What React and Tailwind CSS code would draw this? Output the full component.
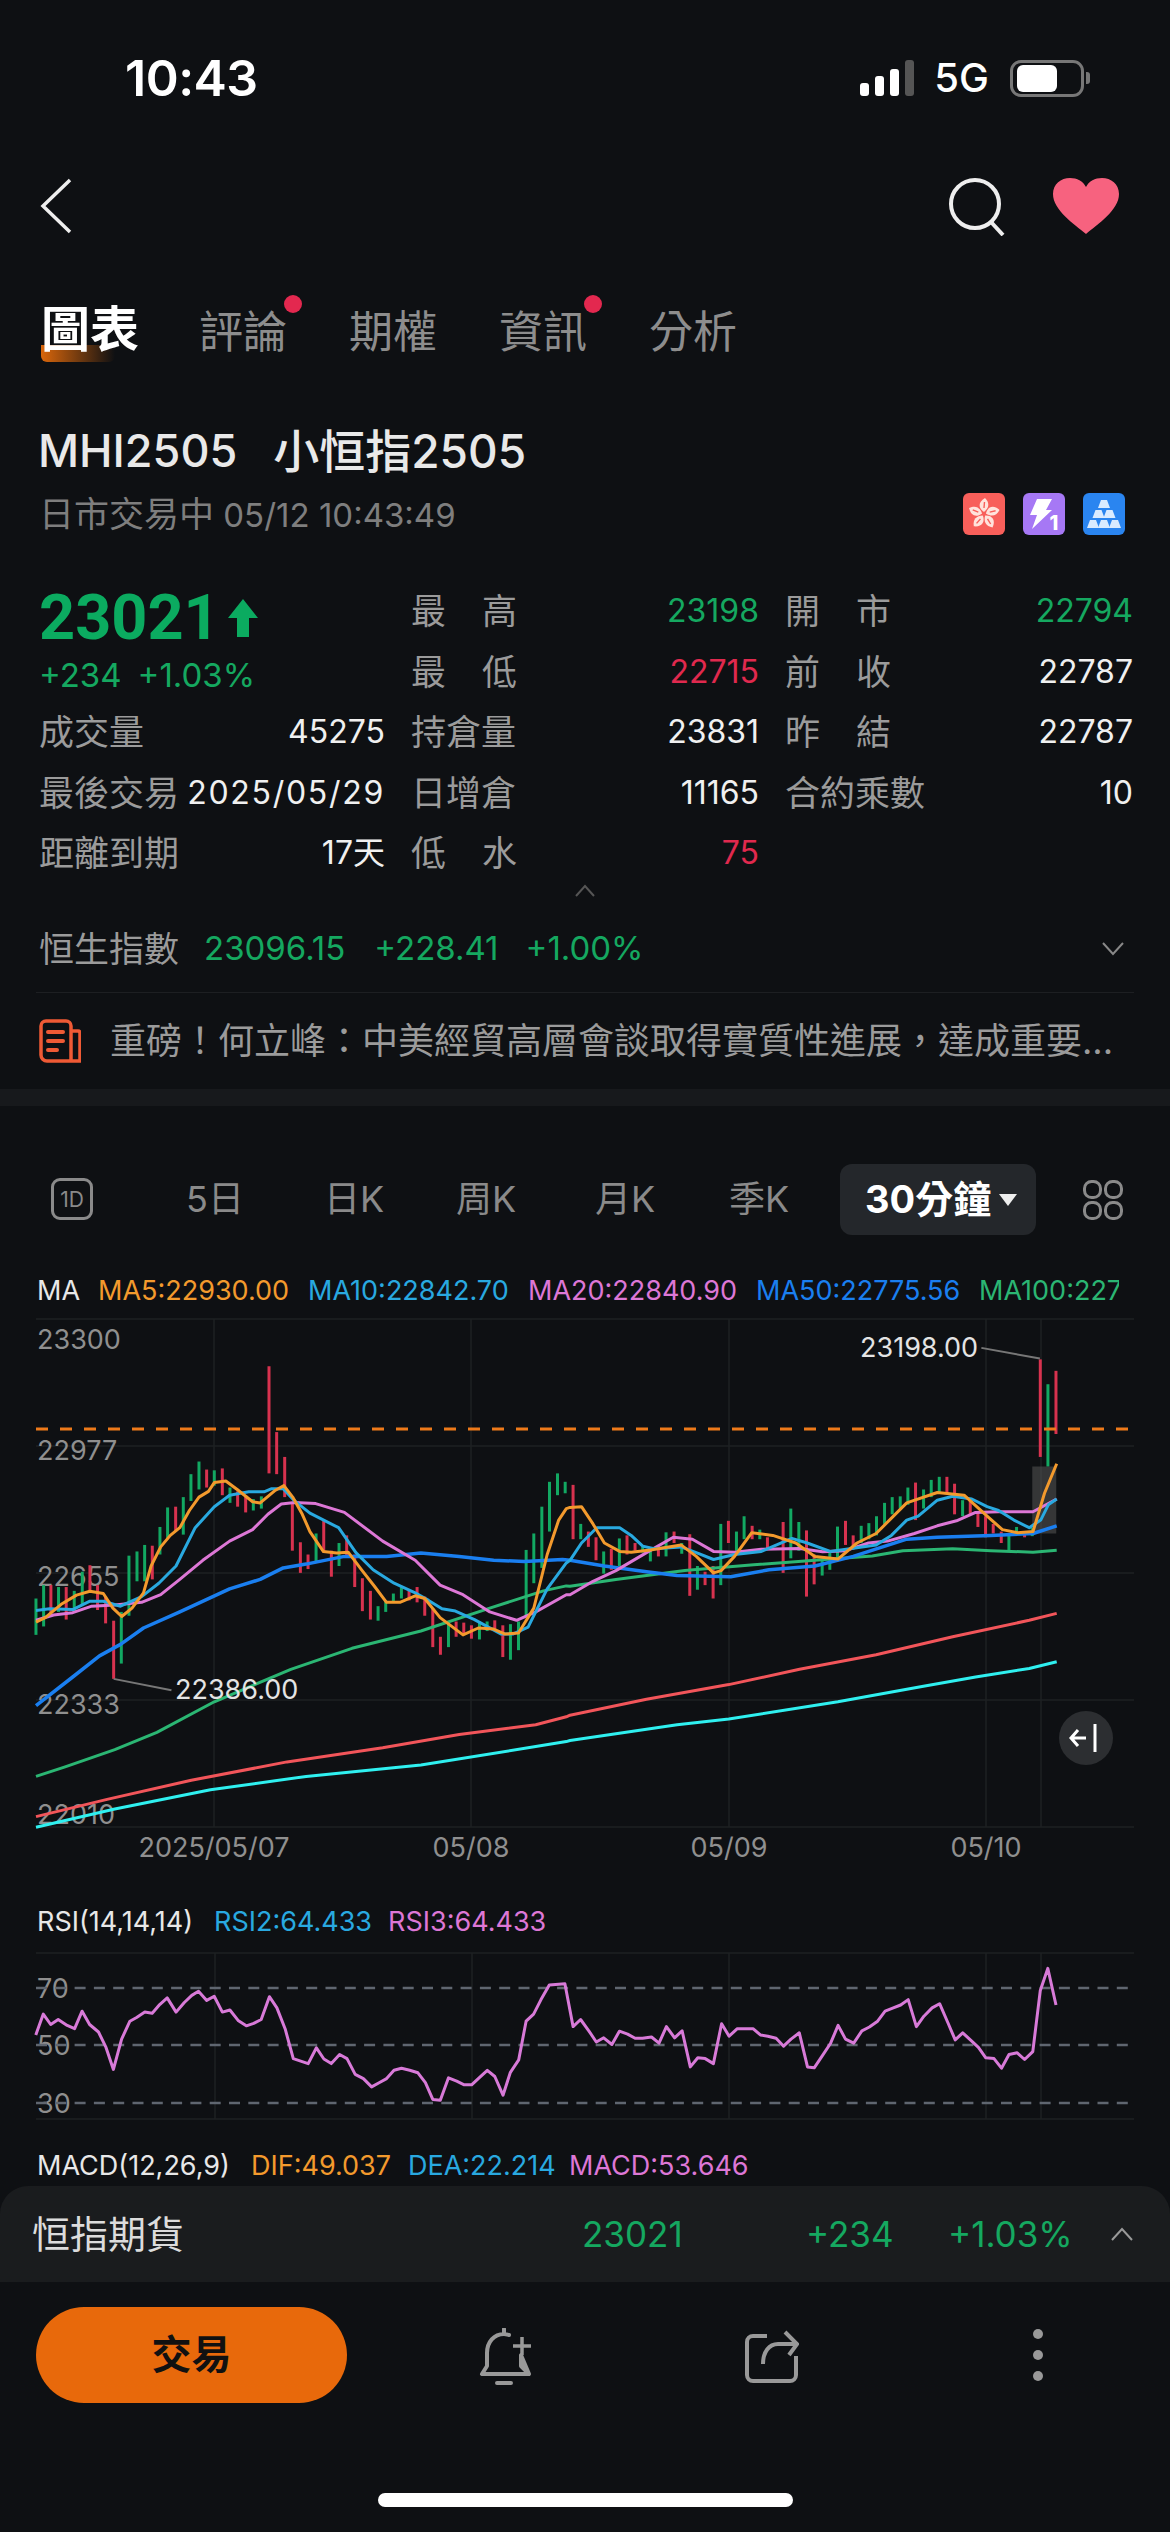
import React from "react";

// chart points were read off 600px wide crops, left one starts at x=0, right one at x=570, both at y=1280
const K = 600 / 1568;
const lx = (x) => x * K;
const rx = (x) => 570 + x * K;
const yy = (y) => 1280 + y * K;

const toPoints = (left, right) =>
  [...left.map(([x, y]) => [lx(x), yy(y)]), ...right.map(([x, y]) => [rx(x), yy(y)])]
    .map(([x, y]) => `${x.toFixed(1)},${y.toFixed(1)}`)
    .join(" ");

const lines = [
  { c: "#f2555a", w: 3, l: [[94,1405],[280,1360],[500,1310],[750,1262],[1000,1225],[1200,1190],[1400,1165],[1480,1144]], r: [[0,1140],[200,1098],[415,1060],[600,1020],[800,982],[1000,935],[1200,892],[1272,874]] },
  { c: "#2ff0f0", w: 3, l: [[94,1433],[300,1385],[550,1335],[800,1300],[1100,1270],[1400,1222],[1480,1209]], r: [[0,1206],[280,1165],[415,1150],[700,1105],[920,1065],[1060,1040],[1200,1018],[1272,1000]] },
  { c: "#2bb673", w: 3, l: [[94,1300],[170,1275],[300,1230],[410,1185],[560,1105],[760,1020],[920,965],[1100,920],[1280,860],[1420,815],[1480,802]], r: [[0,803],[120,785],[300,762],[480,747],[640,735],[790,724],[870,710],[1000,705],[1100,710],[1210,714],[1272,709]] },
  { c: "#1a7ff0", w: 3.5, l: [[94,1115],[190,1040],[260,985],[315,955],[375,912],[470,870],[600,810],[680,785],[740,755],[800,745],[900,725],[1010,725],[1100,716],[1200,725],[1290,735],[1370,738],[1470,733]], r: [[0,735],[90,750],[200,765],[280,775],[420,778],[520,760],[640,750],[740,725],[880,680],[960,675],[1100,670],[1210,665],[1272,645]] },
  { c: "#dd77d6", w: 3, l: [[94,892],[140,878],[190,872],[240,855],[300,852],[370,845],[420,825],[470,785],[530,735],[600,685],[660,655],[700,615],[735,588],[770,584],[825,587],[900,610],[1000,685],[1085,735],[1150,800],[1210,825],[1280,870],[1350,892],[1400,870],[1480,825]], r: [[0,825],[60,790],[120,762],[200,715],[270,675],[320,680],[375,712],[430,714],[500,706],[600,704],[660,713],[720,710],[780,690],[830,685],[900,665],[960,645],[1010,632],[1060,610],[1120,608],[1210,608],[1272,575]] },
  { c: "#29a9e0", w: 3, l: [[94,866],[130,862],[190,864],[235,842],[270,842],[315,855],[370,830],[415,795],[460,750],[510,650],[560,595],[600,565],[650,556],[690,556],[710,548],[740,548],[770,580],[810,612],[885,650],[930,715],[975,760],[1030,795],[1085,820],[1120,840],[1155,862],[1190,868],[1240,890],[1310,928],[1340,928],[1380,910],[1430,810],[1480,742]], r: [[0,735],[30,690],[70,650],[130,650],[160,670],[190,698],[220,705],[290,700],[330,715],[375,733],[430,720],[500,712],[580,678],[620,690],[680,712],[800,695],[840,670],[880,630],[910,620],[960,578],[1000,568],[1050,575],[1090,595],[1120,605],[1160,630],[1200,650],[1230,630],[1250,590],[1272,575]] },
  { c: "#f39a2d", w: 3, l: [[94,897],[118,885],[160,850],[200,826],[235,816],[270,822],[295,860],[318,882],[345,860],[375,820],[395,750],[420,700],[445,670],[470,650],[495,605],[520,570],[545,555],[560,532],[590,528],[620,550],[660,582],[680,585],[720,552],[742,540],[765,570],[790,615],[810,660],[845,712],[880,716],[910,714],[945,760],[980,805],[1010,845],[1045,845],[1085,828],[1110,835],[1150,885],[1210,930],[1250,912],[1290,915],[1320,928],[1355,925],[1395,860],[1430,720],[1460,630],[1480,600]], r: [[0,597],[30,595],[60,640],[90,690],[130,712],[160,714],[210,708],[290,695],[330,725],[375,768],[395,762],[430,725],[475,663],[530,670],[590,690],[640,725],[700,732],[750,690],[800,665],[880,585],[960,558],[1030,565],[1090,620],[1130,655],[1170,663],[1210,660],[1240,560],[1272,483]] },
];

const R = "#d8324f";
const G = "#12a862";
const leftCandles = [
  [94,835,930,G],[114,800,908,G],[133,800,880,R],[153,805,870,G],[173,805,890,R],[194,815,870,G],[215,765,850,G],[235,748,820,R],[255,800,865,R],[276,830,900,R],
  [297,893,1045,R],[317,870,1005,G],[337,723,880,G],[358,712,790,G],[378,695,790,G],[398,697,785,R],[418,648,720,G],[438,597,680,G],[459,595,660,R],[479,570,668,G],
  [499,510,580,G],[520,477,550,G],[540,498,545,R],[560,500,540,G],[581,495,565,R],[601,545,585,G],[621,555,595,R],[642,565,610,R],[662,575,605,G],[683,568,600,G],
  [703,228,508,R],[723,400,510,R],[744,465,570,R],[764,585,710,R],[785,688,768,R],[805,720,758,R],[826,665,740,G],[846,630,715,R],[866,710,778,R],[886,690,750,G],
  [906,670,725,R],[927,720,805,R],[947,782,868,R],[968,815,890,R],[988,855,893,G],[1008,840,870,G],[1028,822,845,G],[1049,805,835,G],[1069,815,840,R],[1090,805,845,R],
  [1110,830,880,R],[1131,860,962,R],[1151,935,982,R],[1172,895,962,G],[1192,895,935,R],[1212,898,930,R],[1232,905,940,R],[1253,895,942,G],[1273,895,920,G],[1293,892,920,R],
  [1314,905,988,R],[1334,902,995,G],[1355,895,970,G],[1375,708,880,G],[1395,665,795,G],[1416,595,755,G],[1436,530,660,G],[1457,508,565,G],[1477,530,560,G],
];
const rightCandles = [
  [8,538,680,R],[28,640,680,G],[48,660,700,R],[68,675,735,R],[88,712,770,G],[108,705,760,R],[129,678,750,G],[149,670,720,R],[170,690,710,R],[190,700,715,G],
  [210,710,738,G],[231,695,725,R],[251,662,725,G],[272,660,690,R],[292,690,718,G],[313,667,828,R],[333,750,812,G],[353,765,800,R],[374,750,835,R],[394,640,800,G],
  [414,632,690,R],[435,660,710,G],[455,620,680,G],[476,645,680,R],[496,655,680,G],[516,675,705,R],[557,635,768,R],[577,600,730,G],[598,635,710,G],[618,657,830,R],
  [638,720,798,R],[659,735,775,G],[679,710,760,G],[699,647,730,G],[720,632,695,R],[740,670,700,R],[761,645,690,G],[781,638,680,G],[801,620,670,G],[822,585,640,G],
  [842,570,615,G],[863,568,600,G],[883,545,590,G],[903,532,630,R],[924,550,600,G],[944,525,570,G],[965,517,560,G],[985,517,560,R],[1005,535,615,R],[1026,578,620,G],
  [1046,580,615,R],[1066,612,648,R],[1086,620,675,R],[1106,640,665,R],[1127,660,690,R],[1147,670,710,G],[1167,648,665,G],[1188,660,675,R],[1208,650,672,G],
  [1229,210,465,R],[1249,275,490,G],[1270,240,405,R],
];

const rsi = [[48,375],[58,325],[68,350],[78,338],[90,352],[100,360],[110,318],[120,350],[132,368],[142,405],[152,458],[163,385],[174,342],[183,333],[194,320],[204,323],[214,302],[224,286],[236,320],[247,297],[257,280],[266,270],[277,292],[287,282],[298,320],[308,315],[319,340],[330,353],[340,347],[350,338],[361,283],[371,310],[382,360],[393,432],[403,438],[413,444],[424,406],[434,433],[444,444],[455,422],[465,432],[476,470],[487,480],[498,500],[508,490],[518,480],[528,460],[538,455],[549,460],[560,466],[570,490],[580,530],[590,532],[601,478],[612,486],[622,495],[632,495],[642,478],[653,460],[663,475],[674,520],[684,465],[695,435],[705,342],[715,325],[725,290],[736,255],[757,252],[768,355],[778,338],[789,365],[799,392],[809,382],[820,398],[830,366],[841,373],[851,383],[861,383],[873,380],[883,395],[893,355],[904,382],[914,365],[925,452],[935,430],[945,432],[956,444],[967,348],[977,378],[988,360],[1009,360],[1019,375],[1029,378],[1040,383],[1050,402],[1060,385],[1071,370],[1082,452],[1091,454],[1102,425],[1113,395],[1123,352],[1133,385],[1144,395],[1155,365],[1165,356],[1176,342],[1186,318],[1197,310],[1207,303],[1217,290],[1228,355],[1238,330],[1249,310],[1259,300],[1270,345],[1280,387],[1290,370],[1301,388],[1311,405],[1321,430],[1332,432],[1342,455],[1352,422],[1363,418],[1373,434],[1384,415],[1394,268],[1404,215],[1415,303]]
  .map(([x, y]) => `${(x / 1.34).toFixed(1)},${(1880 + y / 2.405).toFixed(1)}`)
  .join(" ");

function Label({ children }) {
  return <span className="flex w-[106px] justify-between text-[35px] text-[#9b9b9b]">{children}</span>;
}

function Stat({ label, value, color = "text-[#f0f0f0]", spaced }) {
  return (
    <div className="flex items-center justify-between">
      {spaced ? (
        <Label><span>{label[0]}</span><span>{label[1]}</span></Label>
      ) : (
        <span className="text-[35px] whitespace-nowrap text-[#9b9b9b]">{label}</span>
      )}
      <span className={`text-[32px] whitespace-nowrap ${color}`}>{value}</span>
    </div>
  );
}

function Flower() {
  return (
    <svg viewBox="0 0 42 42" className="h-[42px] w-[42px] rounded-[6px] bg-[#f85f5a]">
      {[0, 72, 144, 216, 288].map((a) => (
        <g key={a} transform={`rotate(${a} 21 21)`}>
          <path d="M21 19 C15 15 15 9 22 5 C27 10 26 15 21 19 Z" fill="#ffe3dc" />
          <path d="M21 15 L21.5 9" stroke="#f85f5a" strokeWidth="1.4" />
        </g>
      ))}
    </svg>
  );
}

function Bolt() {
  return (
    <svg viewBox="0 0 42 42" className="h-[42px] w-[42px] rounded-[6px] bg-[#a678f5]">
      <path d="M14 6 H29 L23 17 H29 L9 36 L14 22 H7 Z" fill="#fff" />
      <text x="31" y="37" fontSize="20" fontWeight="800" fill="#fff" textAnchor="middle">1</text>
    </svg>
  );
}

function Gold() {
  return (
    <svg viewBox="0 0 42 42" className="h-[42px] w-[42px] rounded-[6px] bg-[#2a85f0]">
      {[[15, 7], [9.5, 17], [20.5, 17], [4, 27], [15, 27], [26, 27]].map(([x, y]) => (
        <path key={`${x}-${y}`} d={`M${x + 3} ${y} H${x + 9} L${x + 12} ${y + 8} H${x} Z`} fill="#d9ebff" />
      ))}
    </svg>
  );
}

function Chart() {
  const candles = [
    ...leftCandles.map(([x, a, b, c]) => [lx(x), yy(a), yy(b), c]),
    ...rightCandles.map(([x, a, b, c]) => [rx(x), yy(a), yy(b), c]),
  ];
  return (
    <svg viewBox="0 1310 1170 565" className="block h-[565px] w-[1170px] text-[27px]">
      {[1320, 1447, 1574, 1701, 1828].map((y) => (
        <line key={y} x1="36" x2="1134" y1={y} y2={y} stroke="#1e2023" strokeWidth="1.5" />
      ))}
      {[214, 471, 729, 986, 1041].map((x) => (
        <line key={x} x1={x} x2={x} y1="1320" y2="1828" stroke="#1e2023" strokeWidth="1.5" />
      ))}
      {[["23300", 1350], ["22977", 1461], ["22655", 1587], ["22333", 1715], ["22010", 1825]].map(([t, y]) => (
        <text key={t} x="37" y={y} fill="#8f8f8f">{t}</text>
      ))}
      {candles.map(([x, a, b, c]) => (
        <line key={`${x}-${a}`} x1={x} x2={x} y1={a} y2={b} stroke={c} strokeWidth="3" />
      ))}
      <line x1="36" x2="1128" y1="1430" y2="1430" stroke="#ee7a1a" strokeWidth="3" strokeDasharray="12 12" />
      <rect x={rx(1208)} y={yy(490)} width="24" height="67" fill="#5c5c5c" opacity="0.5" />
      {lines.map((l) => (
        <polyline key={l.c} points={toPoints(l.l, l.r)} fill="none" stroke={l.c} strokeWidth={l.w} strokeLinejoin="round" />
      ))}
      <polyline points={`${lx(297)},${yy(1045)} ${lx(448)},${yy(1075)}`} fill="none" stroke="#777" strokeWidth="2" />
      <polyline points={`${rx(1075)},${yy(180)} ${rx(1228)},${yy(208)}`} fill="none" stroke="#777" strokeWidth="2" />
      <text x="175" y="1700" fill="#e4e4e4">22386.00</text>
      <text x="860" y="1358" fill="#e4e4e4">23198.00</text>
      {[["2025/05/07", 214], ["05/08", 471], ["05/09", 729], ["05/10", 986]].map(([t, x]) => (
        <text key={t} x={x} y="1858" textAnchor="middle" fill="#8f8f8f">{t}</text>
      ))}
      <circle cx="1086" cy="1739" r="27" fill="#2c2e31" />
      <path d="M1086 1739 H1071 M1078 1731 L1071 1739 L1078 1747" fill="none" stroke="#fff" strokeWidth="3" />
      <path d="M1095 1725 V1753" stroke="#fff" strokeWidth="3" />
    </svg>
  );
}

function Rsi() {
  return (
    <svg viewBox="0 1950 1170 175" className="block h-[175px] w-[1170px] text-[27px]">
      {[1954, 2120].map((y) => (
        <line key={y} x1="36" x2="1134" y1={y} y2={y} stroke="#1e2023" strokeWidth="1.5" />
      ))}
      {[215, 472, 729, 986, 1041].map((x) => (
        <line key={x} x1={x} x2={x} y1="1954" y2="2120" stroke="#1e2023" strokeWidth="1.5" />
      ))}
      {[["70", 1989], ["50", 2046], ["30", 2104]].map(([t, y]) => (
        <g key={t}>
          <text x="37" y={y + 10} fill="#8f8f8f">{t}</text>
          <line x1="36" x2="1130" y1={y} y2={y} stroke="#5f6670" strokeWidth="2.5" strokeDasharray="11 8.3" />
        </g>
      ))}
      <polyline points={rsi} fill="none" stroke="#d87ad8" strokeWidth="3" strokeLinejoin="round" />
    </svg>
  );
}

export default function App() {
  return (
    <div className="relative h-[2532px] w-[1170px] overflow-hidden bg-[#0e1013] font-['Inter','Noto_Sans_CJK_TC',sans-serif] text-white">
      {/* status bar */}
      <div className="flex h-[140px] items-start pt-[50px] pr-[86px] pl-[125px]">
        <span className="text-[50px] leading-[56px] font-semibold tracking-[-0.5px]">10:43</span>
        <div className="ml-auto flex items-center pt-[8px]">
          <div className="flex h-[36px] items-end gap-[6px]">
            <div className="h-[13px] w-[9px] rounded-[3px] bg-white" />
            <div className="h-[20px] w-[9px] rounded-[3px] bg-white" />
            <div className="h-[27px] w-[9px] rounded-[3px] bg-white" />
            <div className="h-[36px] w-[9px] rounded-[3px] bg-[#555]" />
          </div>
          <span className="ml-[20px] text-[40px] leading-[40px] font-medium">5G</span>
          <div className="relative ml-[21px] flex h-[37px] w-[74px] items-center rounded-[11px] border-[3px] border-[#777] px-[4px]">
            <div className="h-[27px] w-[40px] rounded-[6px] bg-white" />
            <div className="absolute -right-[9px] h-[12px] w-[4px] rounded-r-[3px] bg-[#777]" />
          </div>
        </div>
      </div>

      {/* nav */}
      <div className="flex h-[130px] items-start justify-between pt-[38px] pr-[50px] pl-[40px]">
        <svg viewBox="0 0 32 56" className="h-[56px] w-[32px]">
          <path d="M30 2 L3 28 L30 54" fill="none" stroke="#eee" strokeWidth="3.5" />
        </svg>
        <div className="flex gap-[46px]">
          <svg viewBox="0 0 58 58" className="h-[58px] w-[58px]">
            <circle cx="27" cy="26" r="24" fill="none" stroke="#eee" strokeWidth="4" />
            <path d="M43 44 L55 57" stroke="#eee" strokeWidth="4" />
          </svg>
          <svg viewBox="0 0 68 56" className="h-[56px] w-[68px]">
            <path d="M34 56 C22 46 1 32 1 16 C1 6 9 0 18 0 C25 0 31 3 34 9 C37 3 43 0 50 0 C59 0 67 6 67 16 C67 32 46 46 34 56 Z" fill="#f7627f" />
          </svg>
        </div>
      </div>

      {/* tabs */}
      <div className="flex h-[120px] items-start pl-[41px] text-[44px] leading-[52px] text-[#8d8d8d]">
        <div className="relative mt-[34px] mr-[60px]">
          <div className="absolute top-[41px] left-0 h-[17px] w-[74px] rounded-b-[6px] bg-gradient-to-r from-[#d9660b] to-transparent" />
          <span className="relative text-[49px] font-bold text-white">圖表</span>
        </div>
        {["評論", "期權", "資訊", "分析"].map((t, i) => (
          <div key={t} className="relative mt-[36px] mr-[62px]">
            {t}
            {i % 2 === 0 && <div className="absolute -top-[11px] -right-[15px] h-[18px] w-[18px] rounded-full bg-[#e3284f]" />}
          </div>
        ))}
      </div>

      {/* title */}
      <div className="mt-[30px] flex h-[62px] items-center pl-[38px] text-[45px] leading-[60px] font-medium text-[#e9e9e9]">
        <span>MHI2505</span>
        <span className="ml-[36px] text-[46px]">小恒指2505</span>
      </div>
      <div className="flex h-[64px] items-center justify-between pr-[45px] pl-[39px]">
        <span className="text-[33px] text-[#7e7e7e]"><span className="text-[35px]">日市交易中</span> 05/12 10:43:49</span>
        <div className="flex gap-[18px]">
          <Flower />
          <Bolt />
          <Gold />
        </div>
      </div>

      {/* quote grid */}
      <div className="mt-[35px] grid h-[303px] grid-cols-[346px_348px_348px] grid-rows-[repeat(5,60.5px)] gap-x-[26px] pl-[39px]">
        <div className="row-span-2 flex flex-col">
          <div className="flex h-[74px] items-center">
            <span className="font-['Roboto',sans-serif] text-[63px] leading-[64px] font-bold text-[#0bab60]">23021</span>
            <svg viewBox="0 0 30 38" className="ml-[8px] h-[38px] w-[30px]">
              <path d="M15 0 L30 19 H21 V38 H9 V19 H0 Z" fill="#0bab60" />
            </svg>
          </div>
          <div className="flex gap-[16px] text-[33px] leading-[40px] text-[#15a860]">
            <span>+234</span>
            <span>+1.03%</span>
          </div>
        </div>
        <Stat spaced label="最高" value="23198" color="text-[#15a860]" />
        <Stat spaced label="開市" value="22794" color="text-[#15a860]" />
        <Stat spaced label="最低" value="22715" color="text-[#e0294e]" />
        <Stat spaced label="前收" value="22787" />
        <Stat label="成交量" value="45275" />
        <Stat label="持倉量" value="23831" />
        <Stat spaced label="昨結" value="22787" />
        <Stat label="最後交易" value="2025/05/29" color="text-[#f0f0f0] tracking-[1.7px]" />
        <Stat label="日增倉" value="11165" />
        <Stat label="合約乘數" value="10" />
        <Stat label="距離到期" value="17天" />
        <Stat spaced label="低水" value="75" color="text-[#e0294e]" />
      </div>

      <div className="flex h-[16px] items-start justify-center">
        <svg viewBox="0 0 20 13" className="h-[13px] w-[20px]">
          <path d="M1 12 L10 2 L19 12" fill="none" stroke="#555" strokeWidth="2" />
        </svg>
      </div>

      {/* index row */}
      <div className="mx-[36px] flex h-[93px] items-center border-b-[1.5px] border-[#1d1f22] pt-[6px] pl-[3px] text-[33px] text-[#15a860]">
        <span className="text-[35px] text-[#9b9b9b]">恒生指數</span>
        <span className="ml-[25px]">23096.15</span>
        <span className="ml-[29px]">+228.41</span>
        <span className="ml-[27px]">+1.00%</span>
        <svg viewBox="0 0 22 14" className="mr-[10px] ml-auto h-[14px] w-[22px]">
          <path d="M1 1 L11 12 L21 1" fill="none" stroke="#888" strokeWidth="2" />
        </svg>
      </div>

      {/* news */}
      <div className="flex h-[96px] items-center pl-[39px]">
        <svg viewBox="0 0 42 44" className="h-[44px] w-[42px]">
          <path d="M32 12 H39 a2 2 0 0 1 2 2 V42 H8 a6 6 0 0 1-6-6 V7 a5 5 0 0 1 5-5 H27 a5 5 0 0 1 5 5 V42" fill="none" stroke="#ef5a35" strokeWidth="3.5" />
          <path d="M9 13 H24 M9 22 H24 M9 31 H18" stroke="#ef5a35" strokeWidth="4" strokeLinecap="round" />
        </svg>
        <span className="ml-[29px] text-[36px] whitespace-nowrap text-[#9b9b9b]">重磅！何立峰：中美經貿高層會談取得實質性進展，達成重要...</span>
      </div>

      <div className="h-[17px] bg-[#17191c]" />

      {/* period tabs */}
      <div className="flex h-[165px] items-start pt-[58px] text-[36px] leading-[71px] text-[#8a8a8a]">
        <div className="mt-[14px] ml-[51px] flex h-[42px] w-[42px] items-center justify-center rounded-[9px] border-[3px] border-[#8a8a8a] text-[21px] leading-none">1D</div>
        <span className="ml-[93px] w-[138px]">5日</span>
        <span className="w-[132px]">日K</span>
        <span className="w-[139px]">周K</span>
        <span className="w-[134px]">月K</span>
        <span className="w-[111px]">季K</span>
        <div className="flex h-[71px] w-[196px] items-center rounded-[12px] bg-[#24272b] pl-[25px] text-[38px] font-bold text-white">
          30分鐘
          <svg viewBox="0 0 18 12" className="ml-[8px] h-[12px] w-[18px]">
            <path d="M0 0 H18 L9 12 Z" fill="#eee" />
          </svg>
        </div>
        <svg viewBox="0 0 40 40" className="mt-[16px] ml-[47px] h-[40px] w-[40px]">
          {[[1.5, 1.5], [22.5, 1.5], [1.5, 22.5], [22.5, 22.5]].map(([x, y]) => (
            <rect key={`${x}-${y}`} x={x} y={y} width="16" height="16" rx="7" fill="none" stroke="#8a8a8a" strokeWidth="3" />
          ))}
        </svg>
      </div>

      {/* MA legend, last one runs off as in the app */}
      <div className="flex h-[38px] w-[1119px] items-center overflow-hidden pl-[37px] text-[27px] leading-[35px] whitespace-nowrap">
        <span className="w-[61px] shrink-0 text-[#e8e8e8]">MA</span>
        <span className="w-[210px] shrink-0 text-[#f39a2d]">MA5:22930.00</span>
        <span className="w-[220px] shrink-0 text-[#29a9e0]">MA10:22842.70</span>
        <span className="w-[228px] shrink-0 text-[#dd77d6]">MA20:22840.90</span>
        <span className="w-[223px] shrink-0 text-[#1a7ff0]">MA50:22775.56</span>
        <span className="shrink-0 text-[#2bb673]">MA100:22775.56</span>
      </div>

      <Chart />

      <div className="flex h-[75px] items-center pt-[21px] pl-[37px] text-[27px]">
        <span className="w-[177px] text-[#e8e8e8]">RSI(14,14,14)</span>
        <span className="w-[174px] text-[#29a9e0]">RSI2:64.433</span>
        <span className="text-[#dd77d6]">RSI3:64.433</span>
      </div>

      <Rsi />

      <div className="flex h-[62px] items-end pl-[37px] text-[27px] leading-[40px]">
        <span className="w-[214px] text-[#e8e8e8]">MACD(12,26,9)</span>
        <span className="w-[157px] text-[#f39a2d]">DIF:49.037</span>
        <span className="w-[161px] text-[#29a9e0]">DEA:22.214</span>
        <span className="text-[#dd77d6]">MACD:53.646</span>
      </div>

      {/* bottom sheet */}
      <div className="relative flex h-[96px] items-center rounded-t-[28px] bg-[#1a1c1e] pr-[37px] pl-[32px] text-[35px] text-[#15a860]">
        <span className="w-[550px] text-[38px] text-[#dcdcdc]">恒指期貨</span>
        <span className="w-[224px]">23021</span>
        <span className="w-[142px]">+234</span>
        <span>+1.03%</span>
        <svg viewBox="0 0 22 14" className="ml-auto h-[14px] w-[22px]">
          <path d="M1 13 L11 2 L21 13" fill="none" stroke="#999" strokeWidth="2" />
        </svg>
      </div>

      {/* actions */}
      <div className="flex items-start pt-[25px] pl-[36px]">
        <div className="flex h-[96px] w-[311px] items-center justify-center rounded-full bg-[#e8690b] text-[40px] font-bold text-[#111]">交易</div>
        <svg viewBox="0 0 53 58" className="mt-[21px] ml-[132px] h-[58px] w-[53px]">
          <path d="M25 1 V6 M3 46 L8 38 V25 C8 14 15 6 25 6 C27 6 28 6.5 30 7 M42 27 V38 L50 46 Z M3 46 H50 M18 55 H32" fill="none" stroke="#999" strokeWidth="4" strokeLinecap="round" strokeLinejoin="round" />
          <path d="M43 9 V27 M34 18 H52" stroke="#999" strokeWidth="3.5" />
        </svg>
        <svg viewBox="0 0 54 53" className="mt-[23px] ml-[213px] h-[53px] w-[54px]">
          <path d="M22 6 H8 a6 6 0 0 0-6 6 V45 a6 6 0 0 0 6 6 H45 a6 6 0 0 0 6-6 V26" fill="none" stroke="#999" strokeWidth="4" />
          <path d="M18 34 C18 22 24 14 33 14 H51 M40 2 L52 14 L44 25" fill="none" stroke="#999" strokeWidth="4" />
        </svg>
        <div className="mt-[22px] ml-[234px] flex flex-col gap-[11px]">
          <div className="h-[10px] w-[10px] rounded-full bg-[#999]" />
          <div className="h-[10px] w-[10px] rounded-full bg-[#999]" />
          <div className="h-[10px] w-[10px] rounded-full bg-[#999]" />
        </div>
      </div>

      <div className="absolute bottom-[25px] left-[378px] h-[14px] w-[415px] rounded-full bg-white" />
    </div>
  );
}
